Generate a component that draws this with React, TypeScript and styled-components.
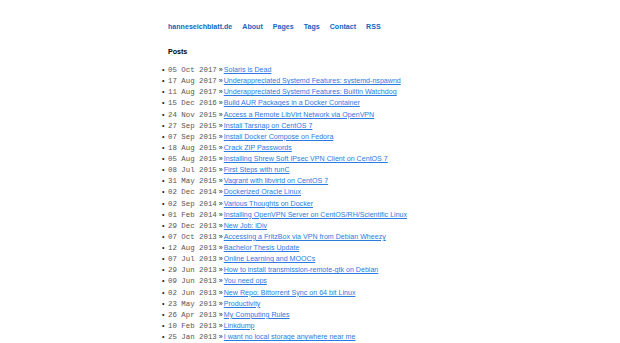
import styled, { createGlobalStyle } from "styled-components";

const Global = createGlobalStyle`
  body {
    margin: 0;
    background: #fff;
    font-family: "Liberation Sans", Arial, sans-serif;
    color: #111;
  }
`;

const Page = styled.div`
  width: 284px;
  margin: 0 auto;
  padding-top: 22px;
  white-space: nowrap;
`;

const Nav = styled.nav`
  display: flex;
  gap: 10px;
  line-height: 11px;
`;

const NavLink = styled.a`
  font-size: 7.1px;
  font-weight: bold;
  color: #1565c0;
  text-decoration: none;
`;

const Heading = styled.h2`
  margin: 14px 0 7px;
  font-size: 7.1px;
  line-height: 11px;
  font-weight: bold;
  color: #000;
`;

const List = styled.ul`
  margin: 0;
  padding: 0;
  list-style: none;
`;

const Item = styled.li`
  height: 11.125px;
  font-size: 7.1px;
  line-height: 11.125px;
  color: #222;

  &::before {
    content: "•";
    display: inline-block;
    width: 6px;
    margin-left: -6px;
    color: #222;
  }
`;

const Date = styled.span`
  font-family: "Liberation Mono", "Courier New", monospace;
  font-size: 7.4px;
  color: #555;
`;

const Sep = styled.span`
  margin: 0 1px 0 2px;
  color: #222;
`;

const PostLink = styled.a`
  color: #2a7ae2;
  text-decoration: underline;
`;

const posts: [string, string][] = [
  ["05 Oct 2017", "Solaris is Dead"],
  ["17 Aug 2017", "Underappreciated Systemd Features: systemd-nspawnd"],
  ["11 Aug 2017", "Underappreciated Systemd Features: Builtin Watchdog"],
  ["15 Dec 2016", "Build AUR Packages in a Docker Container"],
  ["24 Nov 2015", "Access a Remote LibVirt Network via OpenVPN"],
  ["27 Sep 2015", "Install Tarsnap on CentOS 7"],
  ["07 Sep 2015", "Install Docker Compose on Fedora"],
  ["18 Aug 2015", "Crack ZIP Passwords"],
  ["05 Aug 2015", "Installing Shrew Soft IPsec VPN Client on CentOS 7"],
  ["08 Jul 2015", "First Steps with runC"],
  ["31 May 2015", "Vagrant with libvirtd on CentOS 7"],
  ["02 Dec 2014", "Dockerized Oracle Linux"],
  ["02 Sep 2014", "Various Thoughts on Docker"],
  ["01 Feb 2014", "Installing OpenVPN Server on CentOS/RH/Scientific Linux"],
  ["29 Dec 2013", "New Job: iDiv"],
  ["07 Oct 2013", "Accessing a FritzBox via VPN from Debian Wheezy"],
  ["12 Aug 2013", "Bachelor Thesis Update"],
  ["07 Jul 2013", "Online Learning and MOOCs"],
  ["29 Jun 2013", "How to install transmission-remote-gtk on Debian"],
  ["09 Jun 2013", "You need ops"],
  ["02 Jun 2013", "New Repo: Bittorrent Sync on 64 bit Linux"],
  ["23 May 2013", "Productivity"],
  ["26 Apr 2013", "My Computing Rules"],
  ["10 Feb 2013", "Linkdump"],
  ["25 Jan 2013", "I want no local storage anywhere near me"],
];

const navItems = ["hanneseichblatt.de", "About", "Pages", "Tags", "Contact", "RSS"];

export default function App() {
  return (
    <>
      <Global />
      <Page>
        <Nav>
          {navItems.map((n) => (
            <NavLink key={n} href="#">
              {n}
            </NavLink>
          ))}
        </Nav>
        <Heading>Posts</Heading>
        <List>
          {posts.map(([d, t]) => (
            <Item key={t}>
              <Date>{d}</Date>
              <Sep>»</Sep>
              <PostLink href="#">{t}</PostLink>
            </Item>
          ))}
        </List>
      </Page>
    </>
  );
}
